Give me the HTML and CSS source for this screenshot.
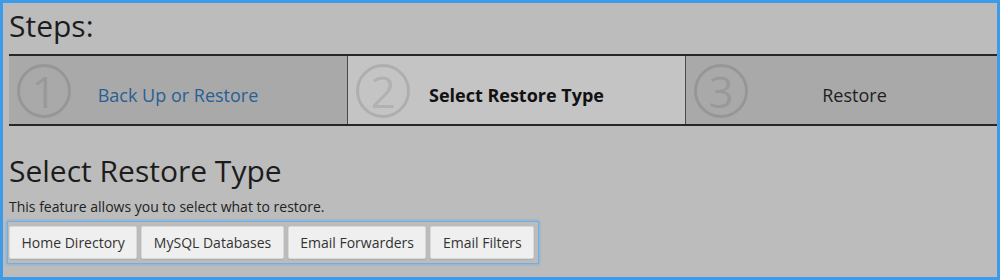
FILE: index.html
```html
<!DOCTYPE html>
<html lang="en">
<head>
    <meta charset="UTF-8">
    <title>Restore</title>
    <link rel="stylesheet" href="styles.css">
</head>
<body>
    <div class="frame">
        <h1 class="title">Steps:</h1>
        <div class="steps">
            <div class="step">
                <span class="step-num">1</span>
                <a class="step-label link" href="#">Back Up or Restore</a>
            </div>
            <div class="step current">
                <span class="step-num">2</span>
                <span class="step-label bold">Select Restore Type</span>
            </div>
            <div class="step">
                <span class="step-num">3</span>
                <span class="step-label">Restore</span>
            </div>
        </div>

        <h2 class="title section">Select Restore Type</h2>
        <p class="intro">This feature allows you to select what to restore.</p>
        <div class="btn-group">
            <button type="button">Home Directory</button>
            <button type="button">MySQL Databases</button>
            <button type="button">Email Forwarders</button>
            <button type="button">Email Filters</button>
        </div>
    </div>
</body>
</html>
```

FILE: styles.css
```css
* {
    margin: 0;
    padding: 0;
    box-sizing: border-box;
}

body {
    font-family: "Open Sans", "DejaVu Sans", sans-serif;
    color: #1c1c1c;
}

.frame {
    width: 1000px;
    height: 280px;
    overflow: hidden;
    border: 3px solid #3d9be9;
    background: #bcbcbc;
    padding: 5px 0 0 6px;
}

.title {
    font-size: 30px;
    font-weight: 400;
    line-height: 36px;
}

.steps {
    display: flex;
    width: 1014px;
    margin-top: 10px;
    border-top: 2px solid #262626;
    border-bottom: 2px solid #262626;
}

.step {
    position: relative;
    flex: 0 0 338px;
    height: 68px;
    display: flex;
    align-items: center;
    justify-content: center;
    background: #a9a9a9;
    font-size: 18px;
}

.step + .step {
    border-left: 1px solid #4a4a4a;
}

.step.current {
    background: #c4c4c4;
}

/* faded number badge behind the label */
.step-num {
    position: absolute;
    left: 8px;
    top: 8px;
    width: 54px;
    height: 54px;
    border: 3px solid rgba(0, 0, 0, 0.11);
    border-radius: 50%;
    display: flex;
    align-items: center;
    justify-content: center;
    font-size: 44px;
    font-weight: 400;
    line-height: 1;
    color: rgba(0, 0, 0, 0.11);
}

.step-label {
    margin-top: 9px;
    color: #1e1e1e;
}

.step-label.link {
    color: #2a5f96;
    text-decoration: none;
}

.step-label.bold {
    font-weight: 700;
    color: #111;
}

.section {
    margin-top: 27px;
}

.intro {
    margin-top: 8px;
    font-size: 14px;
    line-height: 20px;
    color: #222;
}

.btn-group {
    display: inline-flex;
    gap: 4px;
    margin: 4px 0 0 -2px;
    padding: 4px 4px 4px 1px;
    border: 1px solid #6ab0ec;
    box-shadow: 0 0 3px rgba(61, 155, 233, 0.6);
}

.btn-group button {
    height: 33px;
    padding: 0 11.5px;
    font-family: inherit;
    font-size: 14px;
    color: #333;
    background: #efefef;
    border: 1px solid #d9d9d9;
    border-radius: 2px;
    box-shadow: 0 1px 1px rgba(0, 0, 0, 0.08);
    cursor: pointer;
}
```
